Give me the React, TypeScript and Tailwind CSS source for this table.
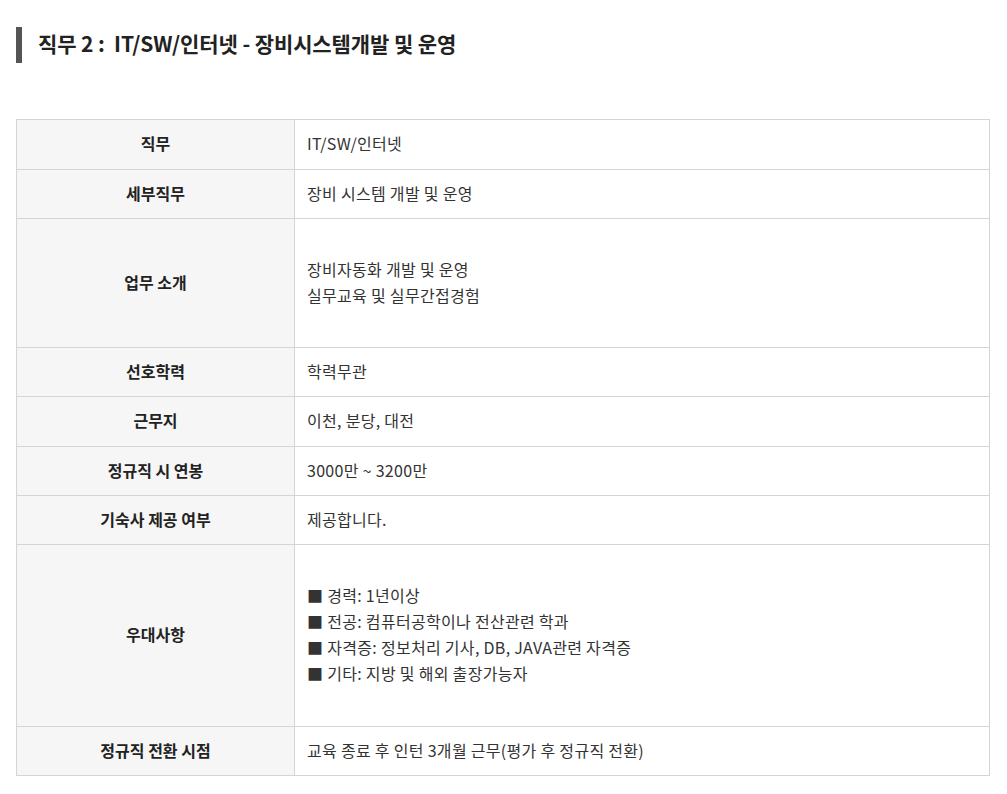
import React from 'react';

const rows: { label: string; lines: string[]; h: string }[] = [
  { label: '직무', lines: ['IT/SW/인터넷'], h: 'h-[49px]' },
  { label: '세부직무', lines: ['장비 시스템 개발 및 운영'], h: 'h-[49px]' },
  { label: '업무 소개', lines: ['장비자동화 개발 및 운영', '실무교육 및 실무간접경험'], h: 'h-[129px]' },
  { label: '선호학력', lines: ['학력무관'], h: 'h-[49px]' },
  { label: '근무지', lines: ['이천, 분당, 대전'], h: 'h-[50px]' },
  { label: '정규직 시 연봉', lines: ['3000만 ~ 3200만'], h: 'h-[49px]' },
  { label: '기숙사 제공 여부', lines: ['제공합니다.'], h: 'h-[49px]' },
  {
    label: '우대사항',
    lines: [
      '■ 경력: 1년이상',
      '■ 전공: 컴퓨터공학이나 전산관련 학과',
      '■ 자격증: 정보처리 기사, DB, JAVA관련 자격증',
      '■ 기타: 지방 및 해외 출장가능자',
    ],
    h: 'h-[182px]',
  },
  { label: '정규직 전환 시점', lines: ['교육 종료 후 인턴 3개월 근무(평가 후 정규직 전환)'], h: 'h-[49px]' },
];

export default function App() {
  return (
    <div className="min-h-screen bg-white text-[#333] font-['Noto_Sans_CJK_KR','Noto_Sans',sans-serif]">
      <div className="px-4 pt-[27px]">
        {/* Title */}
        <div className="flex items-center h-[36px] border-l-[6px] border-[#555] pl-[16px]">
          <h1 className="text-[21px] font-bold text-[#222] whitespace-pre tracking-[-0.1px] pb-[2px]">직무 2 :  IT/SW/인터넷 - 장비시스템개발 및 운영</h1>
        </div>

        {/* Table */}
        <div className="mt-[56px] w-[974px] border border-[#d5d5d5]">
          {rows.map((r, i) => (
            <div key={i} className={`flex ${r.h} ${i > 0 ? 'border-t border-[#d5d5d5]' : ''}`}>
              <div className="w-[278px] shrink-0 bg-[#f6f6f6] border-r border-[#d5d5d5] flex items-center justify-center pb-[3px] text-[16px] font-bold text-[#222]">
                {r.label}
              </div>
              <div className="flex-1 flex flex-col justify-center pl-[12px] pb-[3px] text-[16px] leading-[26px] tracking-[0.3px]">
                {r.lines.map((l, j) => (
                  <div key={j}>{l}</div>
                ))}
              </div>
            </div>
          ))}
        </div>
      </div>
    </div>
  );
}
